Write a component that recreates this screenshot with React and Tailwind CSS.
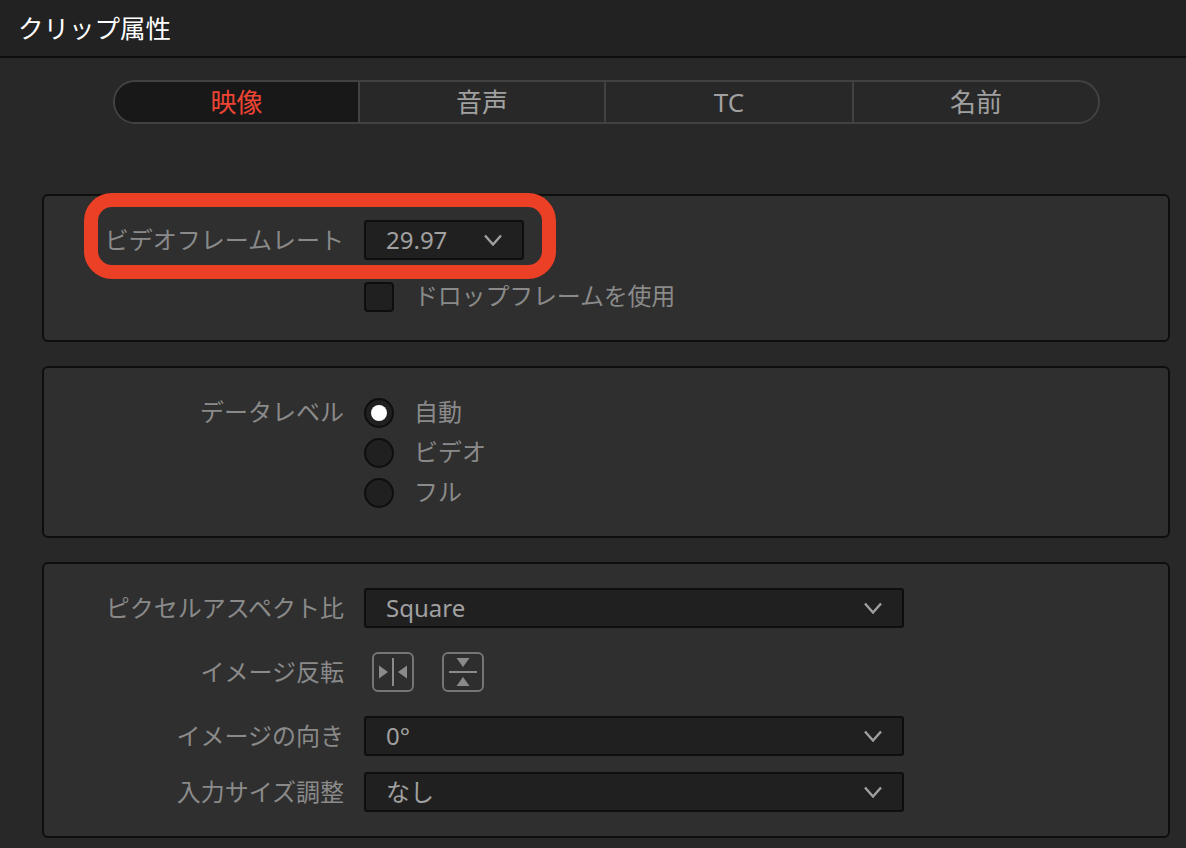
const font = { fontFamily: '"Noto Sans", "Noto Sans CJK JP", sans-serif' };

function Chevron() {
  return (
    <svg width="18" height="12" viewBox="0 0 18 12" fill="none" stroke="#a0a0a0" strokeWidth="2.4">
      <path d="M1 1.5 L9 10.5 L17 1.5" />
    </svg>
  );
}

function Select({ value, wide }) {
  return (
    <div className={`flex h-10 items-center justify-between rounded-[3px] border-2 border-[#0e0e0e] bg-[#202020] pl-5 pr-5 text-[24px] text-[#a0a0a0] ${wide ? 'w-[540px]' : 'w-40'}`}>
      <span className="leading-none">{value}</span>
      <Chevron />
    </div>
  );
}

function Label({ children }) {
  return <div className="w-[300px] shrink-0 whitespace-nowrap text-right text-[24px] leading-10 text-[#8a8a8a]">{children}</div>;
}

function Radio({ checked, label }) {
  return (
    <div className="flex h-[30px] items-center gap-5">
      <div className="flex h-[30px] w-[30px] items-center justify-center rounded-full border-2 border-[#0e0e0e] bg-[#202020]">
        {checked && <div className="h-4 w-4 rounded-full bg-white" />}
      </div>
      <span className="-mt-0.5 text-[24px] leading-none text-[#8a8a8a]">{label}</span>
    </div>
  );
}

function Tab({ children, active, className }) {
  return (
    <div className={`flex items-center justify-center text-[26px] ${active ? 'bg-[#181818] text-[#ee4433]' : 'text-[#a0a0a0]'} ${className}`}>
      {children}
    </div>
  );
}

function FlipH() {
  return (
    <svg width="30" height="30" viewBox="0 0 30 30" fill="#8a8a8a">
      <rect x="14" y="1" width="2" height="28" />
      <path d="M1 8.5 L10 15 L1 21.5 Z" />
      <path d="M29 8.5 L20 15 L29 21.5 Z" />
    </svg>
  );
}

function FlipV() {
  return (
    <svg width="30" height="30" viewBox="0 0 30 30" fill="#8a8a8a">
      <rect x="1" y="14" width="28" height="2" />
      <path d="M8.5 1 L21.5 1 L15 10 Z" />
      <path d="M8.5 29 L21.5 29 L15 20 Z" />
    </svg>
  );
}

function IconButton({ children }) {
  return (
    <div className="flex h-10 w-[42px] items-center justify-center rounded-[6px] border-2 border-[#757575] bg-[#2e2e2e]">
      {children}
    </div>
  );
}

const section = 'relative ml-[42px] w-[1128px] rounded-[6px] border-2 border-[#0e0e0e] bg-[#2f2f2f]';

export default function App() {
  return (
    <div className="h-[848px] w-[1186px] overflow-hidden bg-[#282828]" style={font}>
      <div className="flex h-[58px] items-center border-b-2 border-[#0e0e0e] bg-[#222222] pl-[18px] text-[25.5px] text-white">
        クリップ属性
      </div>

      <div className="ml-[113px] mt-[22px] flex h-11 w-[987px] overflow-hidden rounded-full border-2 border-[#424242]">
        <Tab active className="w-[245px] border-r-2 border-[#424242]">映像</Tab>
        <Tab className="w-[246px] border-r-2 border-[#424242]">音声</Tab>
        <Tab className="w-[248px] border-r-2 border-[#424242]">TC</Tab>
        <Tab className="flex-1">名前</Tab>
      </div>

      <div className={`${section} mt-[70px] h-[148px] pt-6`}>
        <div className="flex gap-5">
          <Label>ビデオフレームレート</Label>
          <Select value="29.97" />
        </div>
        <div className="ml-[320px] mt-[22px] flex h-[30px] items-center gap-5">
          <div className="h-[30px] w-[30px] rounded-[4px] border-2 border-[#0e0e0e] bg-[#202020]" />
          <span className="-mt-0.5 text-[24px] tracking-[-0.2px] leading-none text-[#8a8a8a]">ドロップフレームを使用</span>
        </div>
        <div className="pointer-events-none absolute left-[40px] top-[-3px] h-[86px] w-[472px] rounded-[28px] border-[14px] border-[#ec4026]" />
      </div>

      <div className={`${section} mt-6 flex h-[172px] gap-5 pt-[30px]`}>
        <div className="-mt-px w-[300px] shrink-0 text-right text-[24px] leading-[30px] text-[#8a8a8a]">データレベル</div>
        <div className="flex flex-col gap-[10px]">
          <Radio checked label="自動" />
          <Radio label="ビデオ" />
          <Radio label="フル" />
        </div>
      </div>

      <div className={`${section} mt-6 flex h-[276px] flex-col gap-4 pt-6`}>
        <div className="mb-2 flex gap-5">
          <Label>ピクセルアスペクト比</Label>
          <Select wide value="Square" />
        </div>
        <div className="mb-2 flex gap-5">
          <Label>イメージ反転</Label>
          <div className="ml-2 flex gap-7">
            <IconButton><FlipH /></IconButton>
            <IconButton><FlipV /></IconButton>
          </div>
        </div>
        <div className="flex gap-5">
          <Label>イメージの向き</Label>
          <Select wide value="0°" />
        </div>
        <div className="flex gap-5">
          <Label>入力サイズ調整</Label>
          <Select wide value="なし" />
        </div>
      </div>
    </div>
  );
}
